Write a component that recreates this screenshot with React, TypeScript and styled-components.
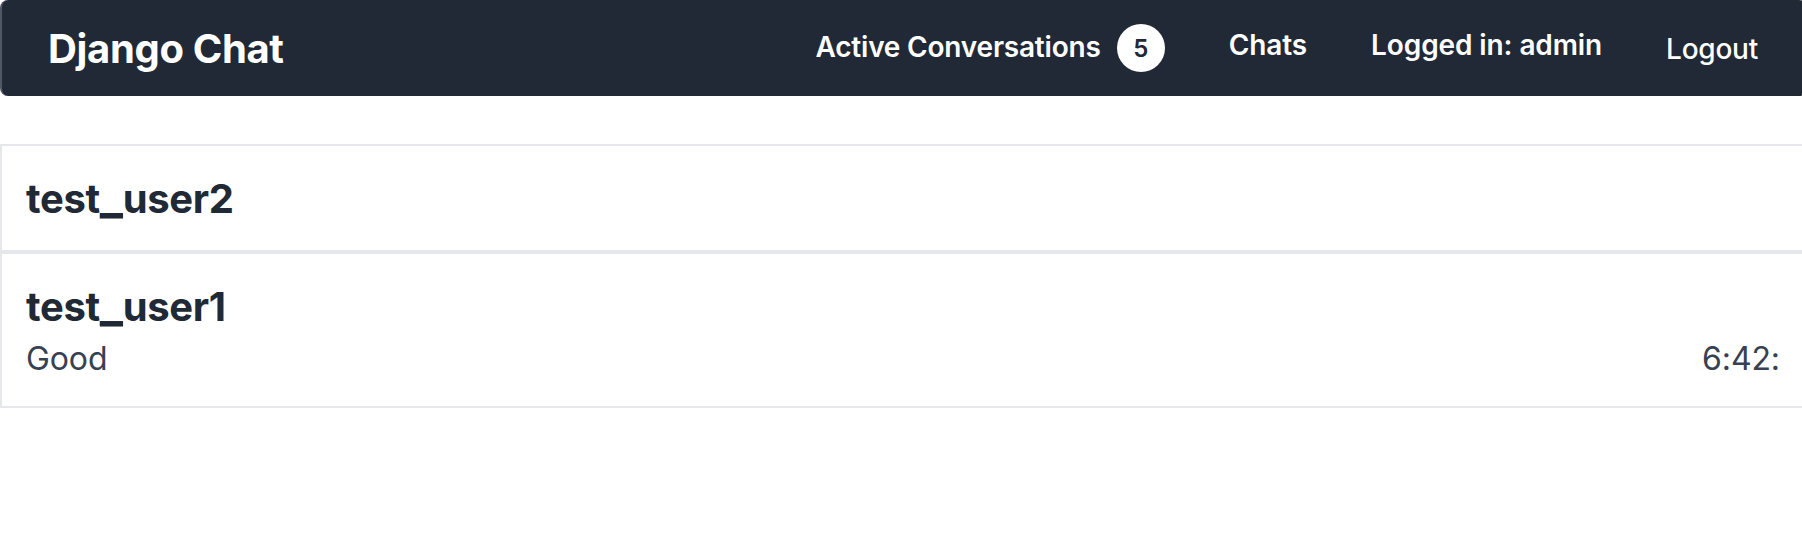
import React from "react";
import styled, { createGlobalStyle } from "styled-components";

const GlobalStyle = createGlobalStyle`
  * { box-sizing: border-box; }
  html { overflow: hidden; }
  body { margin: 0; background: #fff; font-family: Inter, "Liberation Sans", sans-serif; }
`;

const Navbar = styled.nav`
  display: flex;
  justify-content: space-between;
  width: calc(100% + 5px);
  height: 96px;
  padding: 0 49px 0 46px;
  background: #212936;
  border-left: 2px solid #525863;
  border-radius: 8px;
  color: #fff;
`;

const Brand = styled.a`
  font-size: 40px;
  font-weight: 660;
  letter-spacing: -0.35px;
  line-height: 97px;
  white-space: nowrap;
`;

const Links = styled.div`
  display: flex;
  gap: 64px;
`;

const NavItem = styled.span<{ $line?: number; $weight?: number; $spacing?: number }>`
  display: flex;
  align-items: center;
  height: ${(p) => p.$line ?? 90}px;
  font-size: 28px;
  font-weight: ${(p) => p.$weight ?? 580};
  letter-spacing: ${(p) => p.$spacing ?? -0.1}px;
  white-space: nowrap;
`;

const Count = styled.span`
  display: flex;
  align-items: center;
  justify-content: center;
  width: 48px;
  height: 48px;
  margin: 0 0 0 16px;
  border-radius: 50%;
  background: #fff;
  color: #212936;
  font-size: 24px;
  font-weight: 580;
`;

const Label = styled.span`
  line-height: 34px;
  padding-bottom: 2px;
`;

const List = styled.main`
  margin-top: 48px;
`;

const Conversation = styled.article<{ $height: number }>`
  height: ${(p) => p.$height}px;
  padding: 27px 22px 0 24px;
  border: 2px solid #e5e7eb;
  border-right: 0;
`;

const Name = styled.h2`
  margin: 0;
  color: #212936;
  font-size: 40px;
  font-weight: 660;
  letter-spacing: -0.35px;
  line-height: 52px;
`;

const Underscore = styled.span`
  font-size: 49px;
  line-height: 0;
`;

const Preview = styled.div`
  display: flex;
  justify-content: space-between;
  margin-top: 2px;
  color: #374151;
  font-size: 32px;
  font-weight: 430;
  letter-spacing: -0.1px;
  line-height: 48px;
`;

export default function App() {
  return (
    <>
      <GlobalStyle />
      <Navbar>
        <Brand>Django Chat</Brand>
        <Links>
          <NavItem $line={96} $spacing={-0.2}>
            <Label>Active Conversations</Label>
            <Count>5</Count>
          </NavItem>
          <NavItem>Chats</NavItem>
          <NavItem>Logged in: admin</NavItem>
          <NavItem $line={98} $weight={450} $spacing={-0.25}>Logout</NavItem>
        </Links>
      </Navbar>
      <List>
        <Conversation $height={108}>
          <Name>test<Underscore>_</Underscore>user2</Name>
        </Conversation>
        <Conversation $height={156}>
          <Name>test<Underscore>_</Underscore>user1</Name>
          <Preview>
            <span>Good</span>
            <span>6:42:</span>
          </Preview>
        </Conversation>
      </List>
    </>
  );
}
